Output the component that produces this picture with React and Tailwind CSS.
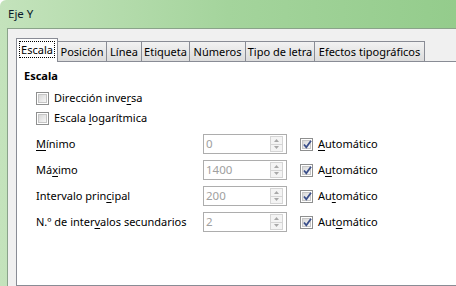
import React from 'react';

const font = { fontFamily: '"Noto Sans", "Open Sans", sans-serif' };

function U({ children }) {
  return <span className="underline underline-offset-2">{children}</span>;
}

function CheckBox({ checked }) {
  return (
    <span className="relative inline-flex h-[13px] w-[13px] shrink-0 items-center justify-center border border-[#8e8f8f] bg-white">
      <span className="h-[9px] w-[9px] border border-[#c6c6c6] bg-gradient-to-br from-[#d9d9d9] to-[#f6f6f6]" />
      {checked && (
        <svg className="absolute left-[1px] top-[0px]" width="11" height="11" viewBox="0 0 11 11">
          <path d="M2 5.5 L4.3 8.3 L9 1.8" fill="none" stroke="#3b4f8a" strokeWidth="1.8" />
        </svg>
      )}
    </span>
  );
}

function Spin({ value }) {
  return (
    <div className="flex h-[20px] w-[84px] items-center border border-[#adadad] bg-white pl-[2px]">
      <span className="flex-1 text-[11.5px] leading-none text-[#a0a0a0]">{value}</span>
      <div className="mr-[3px] flex h-[16px] w-[13px] flex-col border border-[#d5d5d5] bg-[#f4f4f4]">
        <div className="flex flex-1 items-center justify-center border-b border-[#d5d5d5]">
          <svg width="5" height="3" viewBox="0 0 5 3"><path d="M0 3 L2.5 0 L5 3Z" fill="#a8a8a8" /></svg>
        </div>
        <div className="flex flex-1 items-center justify-center">
          <svg width="5" height="3" viewBox="0 0 5 3"><path d="M0 0 L2.5 3 L5 0Z" fill="#a8a8a8" /></svg>
        </div>
      </div>
    </div>
  );
}

const tabs = ['Posición', 'Línea', 'Etiqueta', 'Números', 'Tipo de letra', 'Efectos tipográficos'];
const tabWidths = ['w-[50px]', 'w-[36px]', 'w-[49px]', 'w-[57px]', 'w-[70px]', 'w-[111px]'];

const rows = [
  { label: <><U>M</U>ínimo</>, value: '0', auto: <><U>A</U>utomático</> },
  { label: <>Má<U>x</U>imo</>, value: '1400', auto: <>A<U>u</U>tomático</> },
  { label: <>Intervalo prin<U>c</U>ipal</>, value: '200', auto: <>Au<U>t</U>omático</> },
  { label: <>N.º de inter<U>v</U>alos secundarios</>, value: '2', auto: <>Aut<U>o</U>mático</> },
];

export default function App() {
  return (
    <div
      className="flex h-[286px] w-[456px] flex-col overflow-hidden rounded-tl-[6px] bg-gradient-to-r from-[#c4e3bc] via-[#a4d49c] to-[#94cc8c] text-[11px] text-black"
      style={font}
    >
      <div className="flex h-[28px] shrink-0 items-center pl-[8px] text-[11.5px] text-[#0b1a2a]">Eje Y</div>
      <div className="flex flex-1 pl-[7px]">
        <div className="flex flex-1 flex-col border-l border-t border-[#8aa38a] bg-[#f0f0f0] pl-[8px] pt-[9px]">
          <div className="flex h-[23px] items-end whitespace-nowrap">
            <div className="relative z-10 -mb-[1px] flex h-[24px] w-[42px] items-start justify-center border border-b-0 border-[#898c95] bg-white pt-[2px]">
              <span className="border border-dotted border-black px-[1px] leading-[15px]">Escala</span>
            </div>
            {tabs.map((t, i) => (
              <div
                key={t}
                className={`flex h-[20px] ${tabWidths[i]} -ml-[1px] items-center justify-center border border-b-0 border-[#898c95] bg-gradient-to-b from-[#f2f2f2] to-[#dcdcdc] leading-none first:ml-0`}
              >
                {t}
              </div>
            ))}
          </div>
          <div className="flex w-[460px] flex-1 flex-col whitespace-nowrap border border-[#898c95] bg-white pl-[7px] pt-[6px]">
            <div className="h-[16px] font-bold leading-[16px]">Escala</div>
            <div className="mt-[4px] flex h-[20px] items-center gap-[5px] pl-[12px]">
              <CheckBox />
              <span>Dirección inve<U>r</U>sa</span>
            </div>
            <div className="flex h-[20px] items-center gap-[5px] pl-[12px]">
              <CheckBox />
              <span>Escala <U>l</U>ogarítmica</span>
            </div>
            <div className="mt-[6px] flex flex-col gap-[6px] pl-[12px]">
              {rows.map((r, i) => (
                <div key={i} className="flex h-[20px] items-center">
                  <span className="w-[167px]">{r.label}</span>
                  <Spin value={r.value} />
                  <div className="ml-[13px] flex items-center gap-[5px]">
                    <CheckBox checked />
                    <span>{r.auto}</span>
                  </div>
                </div>
              ))}
            </div>
          </div>
        </div>
      </div>
    </div>
  );
}
